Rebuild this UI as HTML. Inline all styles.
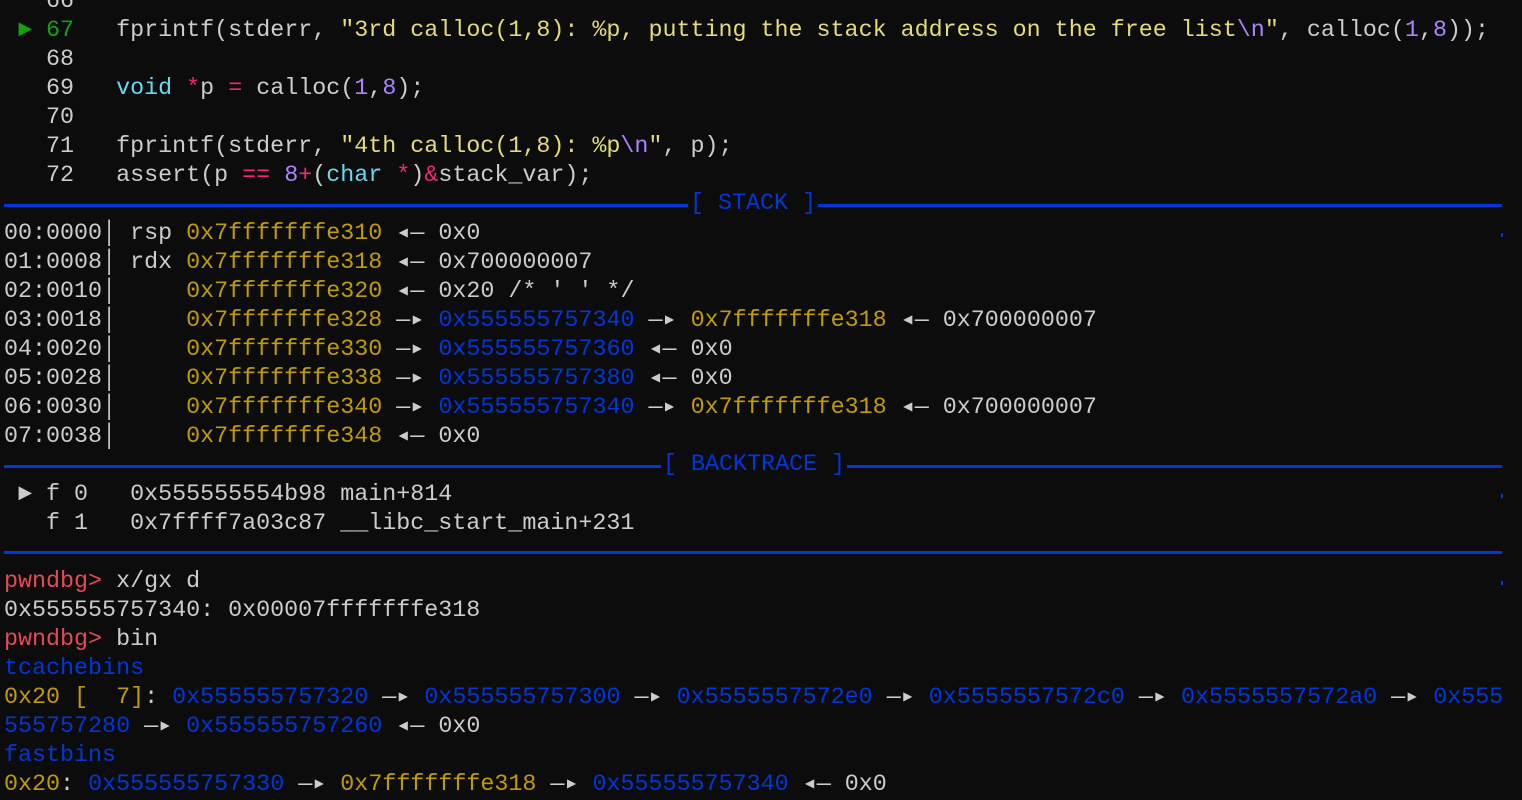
<!DOCTYPE html>
<html><head><meta charset="utf-8"><style>
html,body{margin:0;padding:0;background:#0c0c0c;width:1522px;height:799px;overflow:hidden}
#t{position:absolute;left:4px;top:-12.5px;font-family:"Liberation Mono","DejaVu Sans Mono",monospace;font-size:23.35px;line-height:29px;color:#cccccc}
.r{height:29px;white-space:pre}
.g{color:#13a10e}.s{color:#e6db74}.p{color:#ae81ff}.k{color:#f92672}.c{color:#66d9ef}
.y{color:#c19c00}.b{color:#0037da}.rd{color:#e74856}
.ln{position:absolute;left:4px;width:1498px;height:3px;background:#0037da}
.lb{position:absolute;font-family:"Liberation Mono","DejaVu Sans Mono",monospace;font-size:23.35px;line-height:29px;color:#0037da;background:#0c0c0c;white-space:pre;padding:0 2px}
.tick{position:absolute;left:1501px;width:2px;height:4px;background:#0037da}
</style></head><body>
<div id="t"><div class="r">   66</div><div class="r"> <span class="g">►</span> <span class="g">67</span>   fprintf(stderr, <span class="s">"3rd calloc(1,8): %p, putting the stack address on the free list</span><span class="p">\n</span><span class="s">"</span>, calloc(<span class="p">1</span>,<span class="p">8</span>));</div><div class="r">   68</div><div class="r">   69   <span class="c">void</span> <span class="k">*</span>p <span class="k">=</span> calloc(<span class="p">1</span>,<span class="p">8</span>);</div><div class="r">   70</div><div class="r">   71   fprintf(stderr, <span class="s">"4th calloc(1,8): %p</span><span class="p">\n</span><span class="s">"</span>, p);</div><div class="r">   72   assert(p <span class="k">==</span> <span class="p">8</span><span class="k">+</span>(<span class="c">char</span> <span class="k">*</span>)<span class="k">&amp;</span>stack_var);</div><div class="r"> </div><div class="r">00:0000│ rsp <span class="y">0x7fffffffe310</span> ◂— 0x0</div><div class="r">01:0008│ rdx <span class="y">0x7fffffffe318</span> ◂— 0x700000007</div><div class="r">02:0010│     <span class="y">0x7fffffffe320</span> ◂— 0x20 /* ' ' */</div><div class="r">03:0018│     <span class="y">0x7fffffffe328</span> —▸ <span class="b">0x555555757340</span> —▸ <span class="y">0x7fffffffe318</span> ◂— 0x700000007</div><div class="r">04:0020│     <span class="y">0x7fffffffe330</span> —▸ <span class="b">0x555555757360</span> ◂— 0x0</div><div class="r">05:0028│     <span class="y">0x7fffffffe338</span> —▸ <span class="b">0x555555757380</span> ◂— 0x0</div><div class="r">06:0030│     <span class="y">0x7fffffffe340</span> —▸ <span class="b">0x555555757340</span> —▸ <span class="y">0x7fffffffe318</span> ◂— 0x700000007</div><div class="r">07:0038│     <span class="y">0x7fffffffe348</span> ◂— 0x0</div><div class="r"> </div><div class="r"> ► f 0   0x555555554b98 main+814</div><div class="r">   f 1   0x7ffff7a03c87 __libc_start_main+231</div><div class="r"> </div><div class="r"><span class="rd">pwndbg&gt;</span> x/gx d</div><div class="r">0x555555757340: 0x00007fffffffe318</div><div class="r"><span class="rd">pwndbg&gt;</span> bin</div><div class="r"><span class="b">tcachebins</span></div><div class="r"><span class="y">0x20 [  7]</span>: <span class="b">0x555555757320</span> —▸ <span class="b">0x555555757300</span> —▸ <span class="b">0x5555557572e0</span> —▸ <span class="b">0x5555557572c0</span> —▸ <span class="b">0x5555557572a0</span> —▸ <span class="b">0x555</span></div><div class="r"><span class="b">555757280</span> —▸ <span class="b">0x555555757260</span> ◂— 0x0</div><div class="r"><span class="b">fastbins</span></div><div class="r"><span class="y">0x20</span>: <span class="b">0x555555757330</span> —▸ <span class="y">0x7fffffffe318</span> —▸ <span class="b">0x555555757340</span> ◂— 0x0</div></div>
<div class="ln" style="top:204px"></div>
<div class="lb" style="left:688px;top:190px">[ STACK ]</div>
<div class="ln" style="top:465px"></div>
<div class="lb" style="left:661px;top:451px">[ BACKTRACE ]</div>
<div class="ln" style="top:551px"></div>
<div class="tick" style="top:233px"></div>
<div class="tick" style="top:494px"></div>
<div class="tick" style="top:581px"></div>
</body></html>
